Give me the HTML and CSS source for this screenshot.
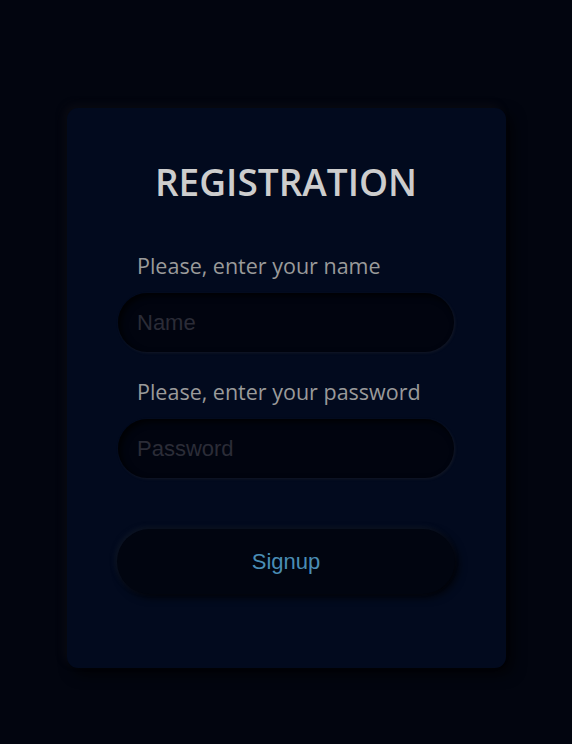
FILE: index.html
```html
<!DOCTYPE html>
<html lang="en">
<head>
<meta charset="utf-8">
<title>Registration</title>
<link rel="stylesheet" href="styles.css">
</head>
<body>
<main class="page">
  <form class="card">
    <h1 class="title">REGISTRATION</h1>
    <label class="label" for="name">Please, enter your name</label>
    <input class="field" id="name" type="text" placeholder="Name">
    <label class="label label-second" for="pass">Please, enter your password</label>
    <input class="field" id="pass" type="password" placeholder="Password">
    <button class="btn" type="button">Signup</button>
  </form>
</main>
</body>
</html>
```
FILE: styles.css
```css
html, body {
  margin: 0;
  padding: 0;
  background: #02050f;
  height: 100%;
}
.page {
  display: flex;
  justify-content: center;
  padding-top: 108px;
}
.card {
  width: 439px;
  height: 560px;
  box-sizing: border-box;
  background: #020a1e;
  border-radius: 11px;
  box-shadow: -4px -4px 10px rgba(70, 60, 50, 0.12), 6px 6px 14px rgba(0, 0, 0, 0.7);
  display: flex;
  flex-direction: column;
  align-items: center;
  padding-top: 52px;
}
.title {
  margin: 0 0 48px;
  font-family: "Open Sans", sans-serif;
  font-weight: 600;
  font-size: 37px;
  line-height: 44px;
  color: #cdcdcd;
  letter-spacing: 0;
}
.label {
  width: 336px;
  box-sizing: border-box;
  padding-left: 19px;
  font-family: "Open Sans", sans-serif;
  font-size: 21.5px;
  line-height: 28px;
  color: #9a9a9a;
  margin-bottom: 13px;
}
.label-second {
  margin-top: 26px;
}
.field {
  width: 336px;
  height: 59px;
  box-sizing: border-box;
  border: none;
  outline: none;
  border-radius: 30px;
  background: #01040f;
  padding: 0 19px;
  font-family: "Liberation Sans", Arial, sans-serif;
  font-size: 22px;
  color: #b0b0b0;
  box-shadow: inset 3px 3px 6px rgba(0, 0, 0, 0.8), 1px 1px 3px rgba(90, 80, 70, 0.2);
}
.field::placeholder {
  color: #2b2c37;
}
.btn {
  margin-top: 51px;
  width: 338px;
  height: 65px;
  border: none;
  border-radius: 33px;
  background: #010510;
  font-family: "Liberation Sans", Arial, sans-serif;
  font-size: 22px;
  color: #4a8db5;
  cursor: pointer;
  box-shadow: -2px -2px 6px rgba(90, 90, 90, 0.15), 3px 3px 8px rgba(0, 0, 0, 0.8);
}
```
